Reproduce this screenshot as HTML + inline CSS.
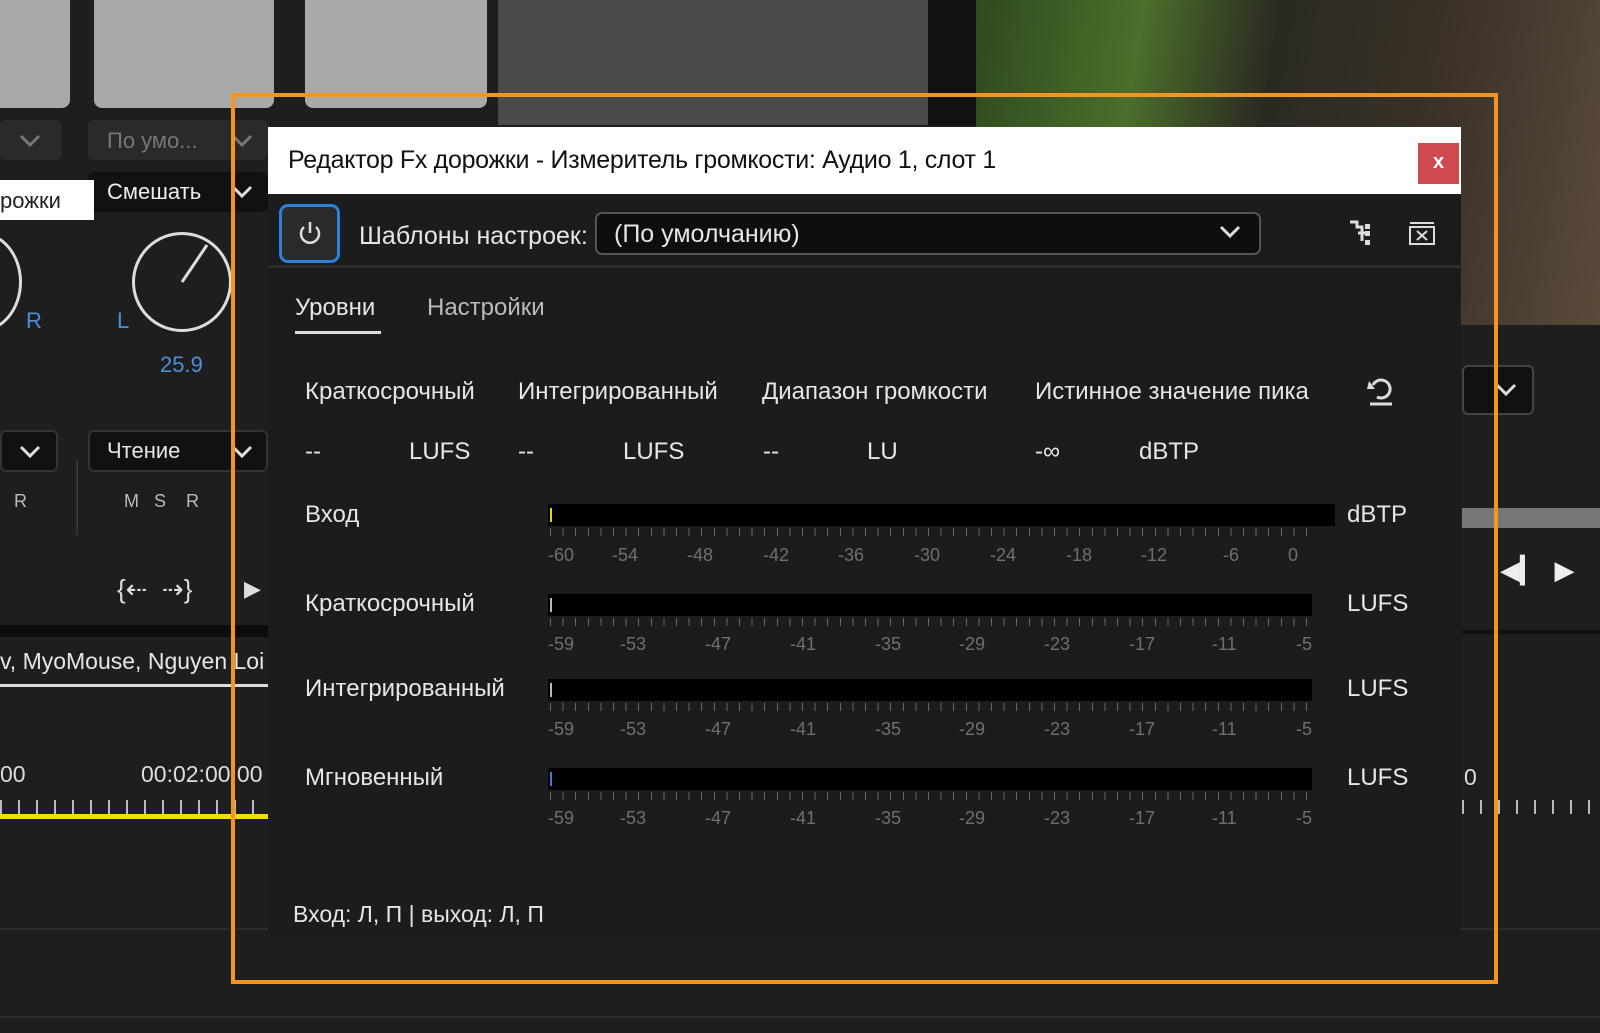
<!DOCTYPE html>
<html><head><meta charset="utf-8"><style>
*{margin:0;padding:0;box-sizing:border-box}
body{width:1600px;height:1033px;overflow:hidden;background:#1e1e1e;position:relative;font-family:"Liberation Sans Narrow","Liberation Sans","DejaVu Sans",sans-serif;color:#e6e6e6}
.a{position:absolute}
.t{position:absolute;white-space:nowrap;line-height:1}
.sc{position:absolute;font-size:18px;color:#6f6f6f}
.bar{position:absolute;background:#000;height:22px}
.ticks{position:absolute;height:8px;background:repeating-linear-gradient(90deg,#666 0 1px,transparent 1px 12.6px)}
.chev{position:absolute}
</style></head><body>
<div class="a" style="left:0;top:0;width:70px;height:108px;background:#a9a9a9;border-radius:0 0 8px 0"></div>
<div class="a" style="left:94px;top:0;width:180px;height:108px;background:#a9a9a9;border-radius:0 0 8px 8px"></div>
<div class="a" style="left:305px;top:0;width:182px;height:108px;background:#a9a9a9;border-radius:0 0 8px 8px"></div>
<div class="a" style="left:498px;top:0;width:430px;height:125px;background:#4a4a4a"></div>
<div class="a" style="left:928px;top:0;width:48px;height:125px;background:#111"></div>
<div class="a" style="left:976px;top:0;width:624px;height:325px;background:linear-gradient(100deg,#2f4a1f 0%,#4b6e2a 25%,#2a2a22 45%,#3a3128 70%,#5a4a3a 100%)"></div>
<div class="a" style="left:0;top:120px;width:62px;height:40px;background:#2a2a2a;border-radius:6px"></div>
<svg class="chev" style="left:18px;top:133px" width="24" height="16"><path d="M3 3 L12 12 L21 3" fill="none" stroke="#777" stroke-width="3"/></svg>
<div class="a" style="left:88px;top:120px;width:180px;height:40px;background:#2a2a2a;border-radius:6px"></div>
<div class="t" style="left:107px;top:130px;font-size:22px;color:#777">По умо...</div>
<svg class="chev" style="left:230px;top:133px" width="24" height="16"><path d="M3 3 L12 12 L21 3" fill="none" stroke="#777" stroke-width="3"/></svg>
<div class="a" style="left:88px;top:172px;width:180px;height:40px;background:#111;border-radius:6px"></div>
<div class="t" style="left:107px;top:181px;font-size:22px;color:#eee">Смешать</div>
<svg class="chev" style="left:230px;top:184px" width="24" height="16"><path d="M3 3 L12 12 L21 3" fill="none" stroke="#ddd" stroke-width="3"/></svg>
<div class="a" style="left:0;top:180px;width:94px;height:40px;background:#fff"></div>
<div class="t" style="left:0;top:190px;font-size:22px;color:#222">рожки</div>
<div class="a" style="left:132px;top:232px;width:100px;height:100px;border:3px solid #ddd;border-radius:50%"></div>
<svg class="a" style="left:132px;top:232px" width="100" height="100"><path d="M50 50 L75 13" stroke="#ddd" stroke-width="3"/></svg>
<div class="a" style="left:-60px;top:232px;width:82px;height:100px;border:3px solid #ddd;border-radius:50%"></div>
<div class="t" style="left:117px;top:310px;font-size:22px;color:#4a90d9">L</div>
<div class="t" style="left:26px;top:310px;font-size:22px;color:#4a90d9">R</div>
<div class="t" style="left:160px;top:354px;font-size:22px;color:#4a90d9">25.9</div>
<div class="a" style="left:0;top:430px;width:58px;height:42px;background:#111;border:2px solid #333;border-radius:6px"></div>
<svg class="chev" style="left:18px;top:444px" width="24" height="16"><path d="M3 3 L12 12 L21 3" fill="none" stroke="#ddd" stroke-width="3"/></svg>
<div class="a" style="left:88px;top:430px;width:180px;height:42px;background:#111;border:2px solid #333;border-radius:6px"></div>
<div class="t" style="left:107px;top:440px;font-size:22px">Чтение</div>
<svg class="chev" style="left:230px;top:444px" width="24" height="16"><path d="M3 3 L12 12 L21 3" fill="none" stroke="#ddd" stroke-width="3"/></svg>
<div class="t" style="left:14px;top:492px;font-size:18px;color:#bbb">R</div>
<div class="t" style="left:124px;top:492px;font-size:18px;color:#bbb">M&nbsp;&nbsp;&nbsp;S&nbsp;&nbsp;&nbsp;&nbsp;R</div>
<div class="a" style="left:76px;top:460px;width:2px;height:75px;background:#333"></div>
<div class="t" style="left:117px;top:576px;font-size:26px;color:#ddd">{⇠&nbsp;&nbsp;⇢}</div>
<div class="t" style="left:244px;top:578px;font-size:22px;color:#ddd">▶</div>
<div class="a" style="left:0;top:625px;width:270px;height:12px;background:#0c0c0c"></div>
<div class="t" style="left:0;top:650px;font-size:23px">v, MyoMouse, Nguyen Loi</div>
<div class="a" style="left:0;top:684px;width:270px;height:3px;background:#ddd"></div>
<div class="t" style="left:0;top:763px;font-size:23px;color:#ddd">00</div>
<div class="t" style="left:141px;top:763px;font-size:23px;color:#ddd">00:02:00:00</div>
<div class="a" style="left:0;top:800px;width:270px;height:14px;background:repeating-linear-gradient(90deg,#bbb 0 2px,transparent 2px 18px)"></div>
<div class="a" style="left:0;top:814px;width:270px;height:5px;background:#f0e000"></div>
<div class="a" style="left:0;top:928px;width:1600px;height:2px;background:#2b2b2b"></div>
<div class="a" style="left:0;top:1016px;width:1600px;height:2px;background:#2b2b2b"></div>
<div class="a" style="left:1462px;top:365px;width:72px;height:50px;background:#111;border:2px solid #444;border-radius:6px"></div>
<svg class="chev" style="left:1494px;top:382px" width="24" height="16"><path d="M3 3 L12 12 L21 3" fill="none" stroke="#ddd" stroke-width="3"/></svg>
<div class="a" style="left:1462px;top:508px;width:138px;height:20px;background:#777"></div>
<div class="t" style="left:1500px;top:557px;font-size:26px;color:#eee">◀▎&nbsp;&nbsp;▶</div>
<div class="a" style="left:1462px;top:630px;width:138px;height:4px;background:#111"></div>
<div class="t" style="left:1464px;top:766px;font-size:23px;color:#ddd">0</div>
<div class="a" style="left:1462px;top:800px;width:138px;height:14px;background:repeating-linear-gradient(90deg,#bbb 0 2px,transparent 2px 18px)"></div>
<!-- dialog -->
<div class="a" style="left:268px;top:127px;width:1193px;height:807px;background:#1c1c1c"></div>
<div class="a" style="left:268px;top:127px;width:1193px;height:67px;background:#fff"></div>
<div class="t" style="left:288px;top:148px;font-size:25px;color:#111;font-family:'Liberation Sans',sans-serif;letter-spacing:-0.3px">Редактор Fx дорожки - Измеритель громкости: Аудио 1, слот 1</div>
<div class="a" style="left:1418px;top:143px;width:41px;height:41px;background:#cf4a4f;color:#fff;font:bold 20px 'Liberation Sans',sans-serif;text-align:center;line-height:38px">x</div>
<div class="a" style="left:279px;top:204px;width:61px;height:59px;border:3px solid #2d7fd8;border-radius:9px;background:#2a2a2a"></div>
<svg class="a" style="left:295px;top:218px" width="30" height="30" viewBox="0 0 30 30"><path d="M9 9 A9 9 0 1 0 21 9" fill="none" stroke="#ddd" stroke-width="2.5"/><path d="M15 4 V15" stroke="#ddd" stroke-width="2.5"/></svg>
<div class="t" style="left:359px;top:224px;font-size:25px">Шаблоны настроек:</div>
<div class="a" style="left:595px;top:212px;width:666px;height:43px;background:#0e0e0e;border:2px solid #555;border-radius:7px"></div>
<div class="t" style="left:614px;top:222px;font-size:25px">(По умолчанию)</div>
<svg class="a" style="left:1218px;top:224px" width="24" height="16"><path d="M3 3 L12 12 L21 3" fill="none" stroke="#ddd" stroke-width="3"/></svg>
<svg class="a" style="left:1348px;top:218px" width="32" height="32"><path d="M2 4h7v5h5v14M10 15h8" fill="none" stroke="#ddd" stroke-width="3"/><rect x="17" y="6" width="5" height="5" fill="#ddd"/><rect x="17" y="13" width="5" height="5" fill="#ddd"/><rect x="17" y="22" width="5" height="5" fill="#ddd"/></svg>
<svg class="a" style="left:1408px;top:220px" width="28" height="26"><rect x="2" y="2" width="24" height="2" fill="#ddd"/><rect x="2" y="7" width="24" height="17" fill="none" stroke="#ddd" stroke-width="2"/><path d="M9 11l10 9M19 11l-10 9" stroke="#ddd" stroke-width="2"/></svg>
<div class="a" style="left:268px;top:265px;width:1193px;height:3px;background:#2d2d2d"></div>
<div class="t" style="left:295px;top:296px;font-size:24px">Уровни</div>
<div class="a" style="left:295px;top:331px;width:86px;height:3px;background:#ddd"></div>
<div class="t" style="left:427px;top:296px;font-size:24px;color:#bbb">Настройки</div>
<div class="t" style="left:305px;top:380px;font-size:24px">Краткосрочный</div>
<div class="t" style="left:518px;top:380px;font-size:24px">Интегрированный</div>
<div class="t" style="left:762px;top:380px;font-size:24px">Диапазон громкости</div>
<div class="t" style="left:1035px;top:380px;font-size:24px">Истинное значение пика</div>
<svg class="a" style="left:1365px;top:375px" width="32" height="32"><path d="M8 10 A9 9 0 1 1 12 22" fill="none" stroke="#ddd" stroke-width="3"/><path d="M4 6 L10 14 L2 14Z" fill="#ddd"/><path d="M5 29h22" stroke="#ddd" stroke-width="3"/></svg>
<div class="t" style="left:305px;top:440px;font-size:24px">--</div>
<div class="t" style="left:409px;top:440px;font-size:24px">LUFS</div>
<div class="t" style="left:518px;top:440px;font-size:24px">--</div>
<div class="t" style="left:623px;top:440px;font-size:24px">LUFS</div>
<div class="t" style="left:763px;top:440px;font-size:24px">--</div>
<div class="t" style="left:867px;top:440px;font-size:24px">LU</div>
<div class="t" style="left:1035px;top:440px;font-size:24px">-∞</div>
<div class="t" style="left:1139px;top:440px;font-size:24px">dBTP</div>
<div class="t" style="left:305px;top:503px;font-size:24px">Вход</div>
<div class="bar" style="left:548px;top:504px;width:787px"></div>
<div class="a" style="left:550px;top:508px;width:2px;height:14px;background:#e8d800"></div>
<div class="ticks" style="left:550px;top:528px;width:766px"></div>
<div class="t" style="left:1347px;top:503px;font-size:24px">dBTP</div>
<div class="sc" style="left:548px;top:545px"><span style="position:absolute;left:0">-60</span><span style="position:absolute;left:64px">-54</span><span style="position:absolute;left:139px">-48</span><span style="position:absolute;left:215px">-42</span><span style="position:absolute;left:290px">-36</span><span style="position:absolute;left:366px">-30</span><span style="position:absolute;left:442px">-24</span><span style="position:absolute;left:518px">-18</span><span style="position:absolute;left:593px">-12</span><span style="position:absolute;left:675px">-6</span><span style="position:absolute;left:740px">0</span></div>
<div class="t" style="left:305px;top:592px;font-size:24px">Краткосрочный</div>
<div class="bar" style="left:548px;top:594px;width:764px"></div>
<div class="a" style="left:550px;top:598px;width:2px;height:14px;background:#bbb"></div>
<div class="ticks" style="left:550px;top:618px;width:766px"></div>
<div class="t" style="left:1347px;top:592px;font-size:24px">LUFS</div>
<div class="sc" style="left:548px;top:634px"><span style="position:absolute;left:0">-59</span><span style="position:absolute;left:72px">-53</span><span style="position:absolute;left:157px">-47</span><span style="position:absolute;left:242px">-41</span><span style="position:absolute;left:327px">-35</span><span style="position:absolute;left:411px">-29</span><span style="position:absolute;left:496px">-23</span><span style="position:absolute;left:581px">-17</span><span style="position:absolute;left:664px">-11</span><span style="position:absolute;left:748px">-5</span></div>
<div class="t" style="left:305px;top:677px;font-size:24px">Интегрированный</div>
<div class="bar" style="left:548px;top:679px;width:764px"></div>
<div class="a" style="left:550px;top:683px;width:2px;height:14px;background:#bbb"></div>
<div class="ticks" style="left:550px;top:703px;width:766px"></div>
<div class="t" style="left:1347px;top:677px;font-size:24px">LUFS</div>
<div class="sc" style="left:548px;top:719px"><span style="position:absolute;left:0">-59</span><span style="position:absolute;left:72px">-53</span><span style="position:absolute;left:157px">-47</span><span style="position:absolute;left:242px">-41</span><span style="position:absolute;left:327px">-35</span><span style="position:absolute;left:411px">-29</span><span style="position:absolute;left:496px">-23</span><span style="position:absolute;left:581px">-17</span><span style="position:absolute;left:664px">-11</span><span style="position:absolute;left:748px">-5</span></div>
<div class="t" style="left:305px;top:766px;font-size:24px">Мгновенный</div>
<div class="bar" style="left:548px;top:768px;width:764px"></div>
<div class="a" style="left:550px;top:772px;width:2px;height:14px;background:#3b7fd6"></div>
<div class="ticks" style="left:550px;top:792px;width:766px"></div>
<div class="t" style="left:1347px;top:766px;font-size:24px">LUFS</div>
<div class="sc" style="left:548px;top:808px"><span style="position:absolute;left:0">-59</span><span style="position:absolute;left:72px">-53</span><span style="position:absolute;left:157px">-47</span><span style="position:absolute;left:242px">-41</span><span style="position:absolute;left:327px">-35</span><span style="position:absolute;left:411px">-29</span><span style="position:absolute;left:496px">-23</span><span style="position:absolute;left:581px">-17</span><span style="position:absolute;left:664px">-11</span><span style="position:absolute;left:748px">-5</span></div>
<div class="t" style="left:293px;top:903px;font-size:23px">Вход: Л, П | выход: Л, П</div>
<div class="a" style="left:231px;top:93px;width:1267px;height:891px;border:4px solid #f7941d"></div>
</body></html>
